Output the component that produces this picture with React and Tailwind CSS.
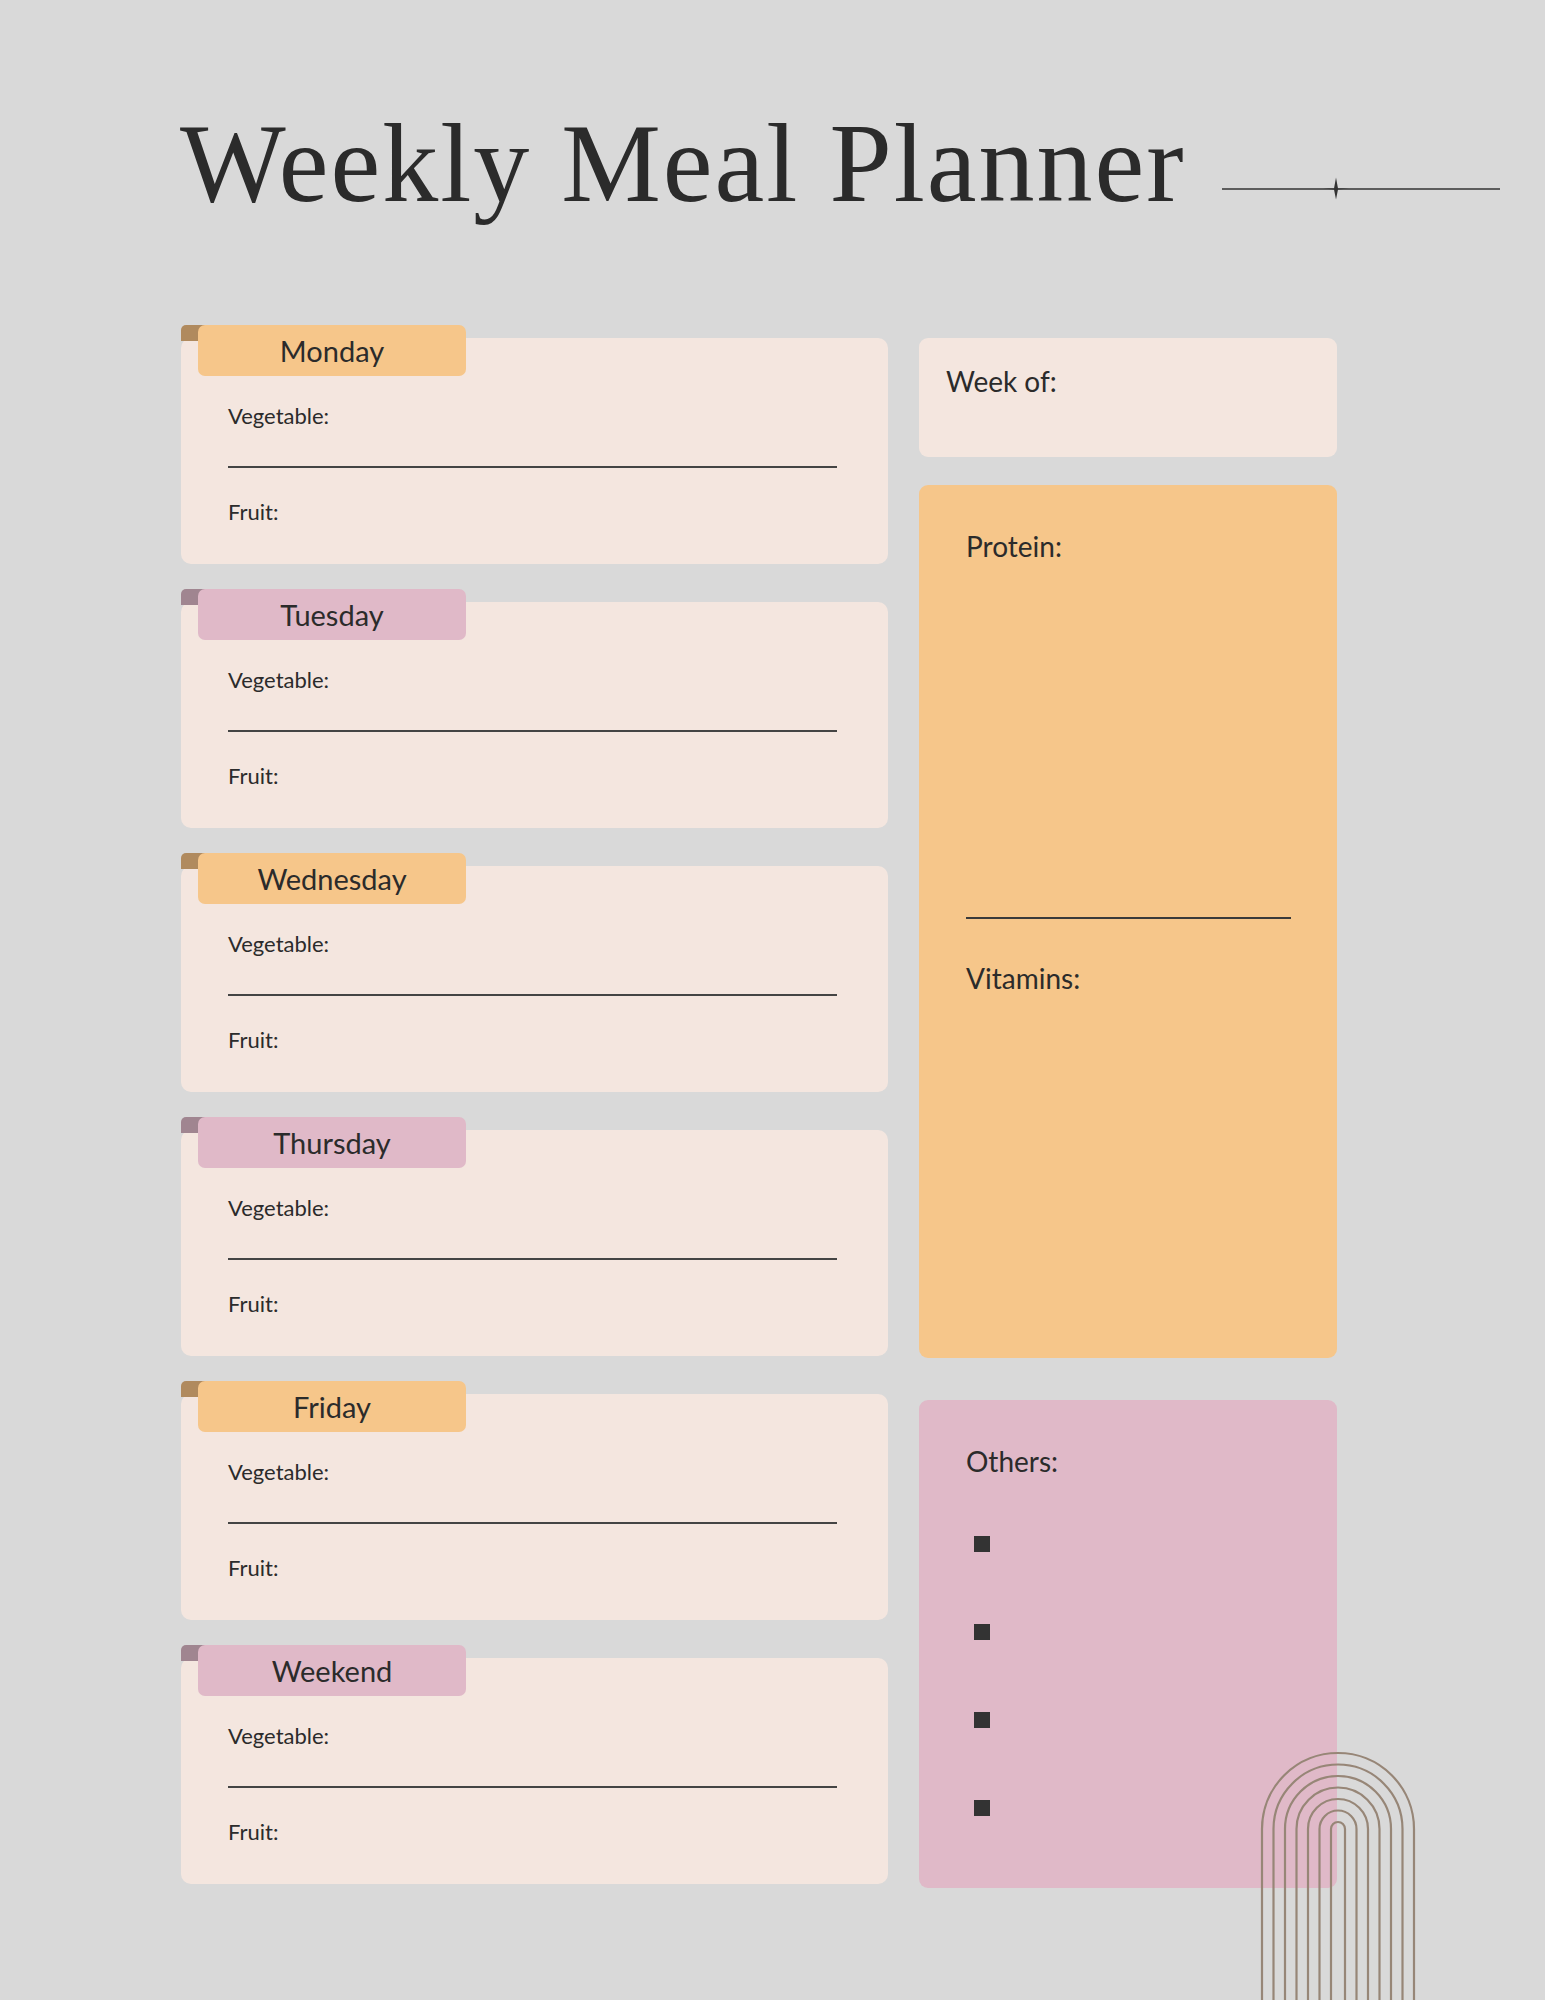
export default function App() {
  const days = [
    ["Monday", "bg-[#f6c68a]", "bg-[#b08a5e]"],
    ["Tuesday", "bg-[#e0b9c8]", "bg-[#a08590]"],
    ["Wednesday", "bg-[#f6c68a]", "bg-[#b08a5e]"],
    ["Thursday", "bg-[#e0b9c8]", "bg-[#a08590]"],
    ["Friday", "bg-[#f6c68a]", "bg-[#b08a5e]"],
    ["Weekend", "bg-[#e0b9c8]", "bg-[#a08590]"],
  ];
  const arcs = [0, 1, 2, 3, 4, 5, 6].map((i) => 76 - i * 11.5);
  return (
    <div className="relative w-[1545px] h-[2000px] overflow-hidden bg-[#d9d9d9] text-[#2b2b2b] font-[family-name:Lato,sans-serif]">
      <div className="flex items-start pt-[98px] pl-[180px]">
        <h1 className="font-[family-name:Liberation_Serif,serif] text-[112px] leading-[130px] tracking-[2px] font-normal w-[1042px]">
          Weekly Meal Planner
        </h1>
        <svg width="278" height="30" viewBox="0 0 278 30" className="mt-[76px]">
          <line x1="0" y1="15" x2="278" y2="15" stroke="#333" strokeWidth="1.6" />
          <path d="M116 15 L114 4 L112 15 L101 15 L112 16 L114 26 L116 16 L127 15 Z" fill="#333" transform="translate(0,-0.5)" />
        </svg>
      </div>
      <div className="flex pl-[181px] pt-[97px] gap-[31px]">
        <div className="flex flex-col gap-[25px] w-[707px]">
          {days.map(([d, tab, corner]) => (
            <div key={d} className="relative pt-[13px]">
              <div className={`absolute left-0 top-0 w-[24px] h-[16px] rounded-tl-[5px] ${corner}`} />
              <div className={`absolute left-[17px] top-0 w-[268px] h-[51px] rounded-[7px] ${tab} flex items-center justify-center text-[29px]`}>
                {d}
              </div>
              <div className="h-[226px] rounded-[10px] bg-[#f4e6df] pl-[47px] pr-[51px] pt-[64px]">
                <div className="text-[22px] leading-[28px]">Vegetable:</div>
                <div className="mt-[36px] h-[2px] bg-[#444]" />
                <div className="mt-[30px] text-[22px] leading-[28px]">Fruit:</div>
              </div>
            </div>
          ))}
        </div>
        <div className="flex flex-col w-[418px] pt-[13px]">
          <div className="h-[119px] rounded-[9px] bg-[#f4e6df] px-[27px] pt-[22px] text-[28px]">Week of:</div>
          <div className="mt-[28px] h-[873px] rounded-[9px] bg-[#f6c68a] px-[47px] pt-[40px] text-[28px]">
            <div>Protein:</div>
            <div className="mt-[350px] mr-[-1px] h-[2px] bg-[#3a3a3a]" />
            <div className="mt-[38px]">Vitamins:</div>
          </div>
          <div className="mt-[42px] h-[488px] rounded-[9px] bg-[#e0b9c8] px-[47px] pt-[40px] text-[28px]">
            <div>Others:</div>
            <div className="flex flex-col gap-[72px] mt-[54px] pl-[8px]">
              {[0, 1, 2, 3].map((i) => (
                <div key={i} className="w-[16px] h-[16px] bg-[#333]" />
              ))}
            </div>
          </div>
        </div>
      </div>
      <svg className="absolute left-[1258px] top-[1749px]" width="160" height="260" viewBox="0 0 160 260">
        {arcs.map((r, i) => (
          <path key={i} d={`M ${80 - r} 260 L ${80 - r} ${80} A ${r} ${r} 0 0 1 ${80 + r} 80 L ${80 + r} 260`} fill="none" stroke="#978677" strokeWidth="2.2" />
        ))}
      </svg>
    </div>
  );
}
